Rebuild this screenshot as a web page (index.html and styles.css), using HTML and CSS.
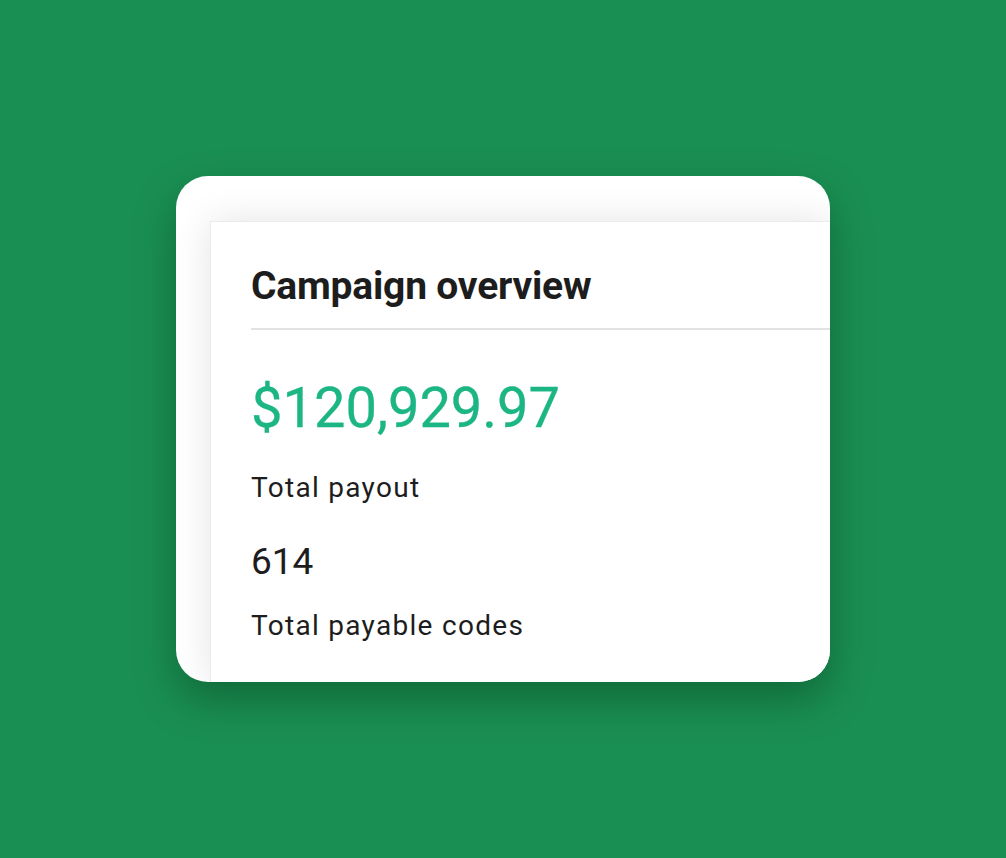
FILE: index.html
```html
<!DOCTYPE html>
<html>
<head>
<meta charset="utf-8">
<link rel="stylesheet" href="styles.css">
</head>
<body>
<div class="frame">
  <div class="panel">
    <h2 class="title">Campaign overview</h2>
    <div class="stats">
      <div class="amount">$120,929.97</div>
      <div class="label">Total payout</div>
      <div class="count">614</div>
      <div class="label">Total payable codes</div>
    </div>
  </div>
</div>
</body>
</html>
```
FILE: styles.css
```css
html, body {
  margin: 0;
  height: 100%;
}
body {
  background: #1a8f53;
  padding: 176px 0 0 176px;
  box-sizing: border-box;
  font-family: Roboto, "Liberation Sans", sans-serif;
}
.frame {
  width: 654px;
  height: 506px;
  border-radius: 32px;
  background: #ffffff;
  box-shadow: 0 18px 40px rgba(0, 40, 15, 0.35);
  overflow: hidden;
  box-sizing: border-box;
  padding: 45px 0 0 34px;
}
.panel {
  height: 100%;
  background: #fff;
  border-top: 1px solid #ebebeb;
  border-left: 1px solid #ebebeb;
  box-shadow: 0 0 36px rgba(0, 0, 0, 0.11);
  padding: 0 0 0 40px;
  box-sizing: border-box;
}
.title {
  margin: 0;
  padding: 42px 0 0;
  height: 64px;
  font-size: 39px;
  font-weight: 700;
  color: #1d1d1d;
  letter-spacing: -0.2px;
  line-height: 44px;
  border-bottom: 2px solid #e2e2e2;
}
.stats {
  display: flex;
  flex-direction: column;
}
.amount {
  margin-top: 45px;
  font-size: 56px;
  line-height: 66px;
  color: #1cb584;
  -webkit-text-stroke: 0.3px #1cb584;
}
.label {
  font-size: 28px;
  line-height: 34px;
  color: #1d1d1d;
  letter-spacing: 1.3px;
  margin-top: 30px;
}
.count {
  margin-top: 37px;
  font-size: 37px;
  line-height: 40px;
  color: #1d1d1d;
}
.count + .label {
  margin-top: 27px;
}
```
